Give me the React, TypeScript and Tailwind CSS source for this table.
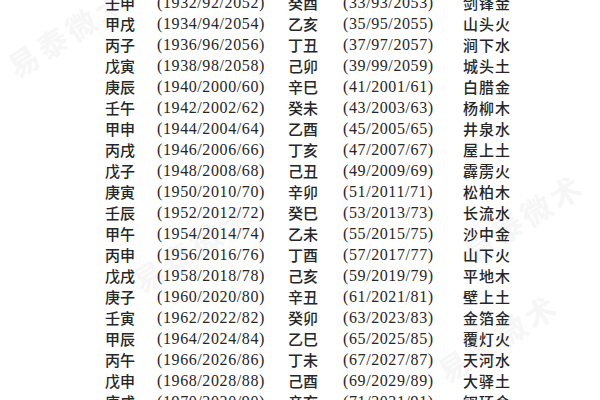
const rows: [string, string, string, string, string][] = [
  ["壬申", "(1932/92/2052)", "癸酉", "(33/93/2053)", "剑锋金"],
  ["甲戌", "(1934/94/2054)", "乙亥", "(35/95/2055)", "山头火"],
  ["丙子", "(1936/96/2056)", "丁丑", "(37/97/2057)", "涧下水"],
  ["戊寅", "(1938/98/2058)", "己卯", "(39/99/2059)", "城头土"],
  ["庚辰", "(1940/2000/60)", "辛巳", "(41/2001/61)", "白腊金"],
  ["壬午", "(1942/2002/62)", "癸未", "(43/2003/63)", "杨柳木"],
  ["甲申", "(1944/2004/64)", "乙酉", "(45/2005/65)", "井泉水"],
  ["丙戌", "(1946/2006/66)", "丁亥", "(47/2007/67)", "屋上土"],
  ["戊子", "(1948/2008/68)", "己丑", "(49/2009/69)", "霹雳火"],
  ["庚寅", "(1950/2010/70)", "辛卯", "(51/2011/71)", "松柏木"],
  ["壬辰", "(1952/2012/72)", "癸巳", "(53/2013/73)", "长流水"],
  ["甲午", "(1954/2014/74)", "乙未", "(55/2015/75)", "沙中金"],
  ["丙申", "(1956/2016/76)", "丁酉", "(57/2017/77)", "山下火"],
  ["戊戌", "(1958/2018/78)", "己亥", "(59/2019/79)", "平地木"],
  ["庚子", "(1960/2020/80)", "辛丑", "(61/2021/81)", "壁上土"],
  ["壬寅", "(1962/2022/82)", "癸卯", "(63/2023/83)", "金箔金"],
  ["甲辰", "(1964/2024/84)", "乙巳", "(65/2025/85)", "覆灯火"],
  ["丙午", "(1966/2026/86)", "丁未", "(67/2027/87)", "天河水"],
  ["戊申", "(1968/2028/88)", "己酉", "(69/2029/89)", "大驿土"],
  ["庚戌", "(1970/2030/90)", "辛亥", "(71/2031/91)", "钗环金"],
];

const cjk = "font-['Noto_Sans_CJK_SC',sans-serif] text-[15px] font-medium";
const num = "font-['Liberation_Serif','Noto_Sans_CJK_SC',serif] text-[16px] tracking-[0.6px]";

function Watermark({ className }: { className: string }) {
  return (
    <div
      className={`pointer-events-none absolute -rotate-[32deg] font-['Noto_Sans_CJK_SC',sans-serif] text-[30px] font-bold tracking-[4px] text-[#f6f6f6] ${className}`}
    >
      易泰微术
    </div>
  );
}

export default function App() {
  return (
    <div className="relative h-[400px] w-[600px] overflow-hidden bg-white text-[#262626]">
      <Watermark className="left-[0px] top-[10px]" />
      <Watermark className="left-[125px] top-[225px]" />
      <Watermark className="left-[455px] top-[195px]" />
      <Watermark className="left-[430px] top-[315px]" />

      <div className="relative -mt-[8px] flex flex-col pl-[105px]">
        {rows.map((r) => (
          <div key={r[0]} className="flex h-[21px] items-center whitespace-nowrap leading-[21px]">
            <span className={`w-[52px] ${cjk}`}>{r[0]}</span>
            <span className={`w-[131px] ${num}`}>{r[1]}</span>
            <span className={`w-[55px] ${cjk}`}>{r[2]}</span>
            <span className={`w-[120px] ${num}`}>{r[3]}</span>
            <span className={`${cjk} tracking-[1px]`}>{r[4]}</span>
          </div>
        ))}
      </div>
    </div>
  );
}
